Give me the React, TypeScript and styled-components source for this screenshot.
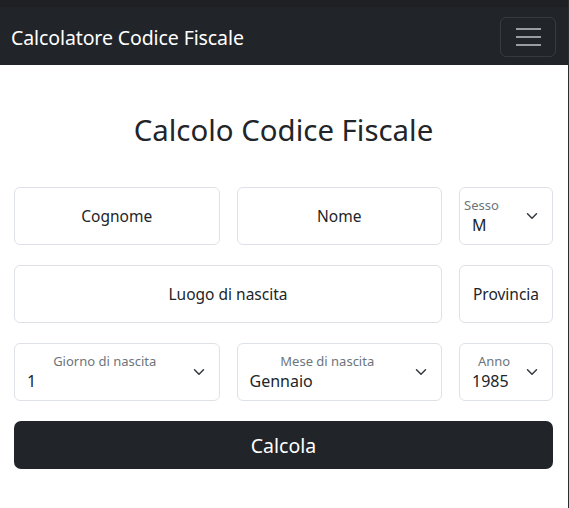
import styled, { createGlobalStyle } from "styled-components";

const GlobalStyle = createGlobalStyle`
  * { box-sizing: border-box; }
  body {
    margin: 0;
    font-family: "Noto Sans", "Open Sans", sans-serif;
    color: #212529;
    background: #fff;
  }
`;

type Align = "left" | "center";

const Chevron = () => (
  <ChevronIcon viewBox="0 0 16 16" aria-hidden>
    <path d="m2 5 6 6 6-6" fill="none" stroke="#343a40" strokeWidth="2" strokeLinecap="round" strokeLinejoin="round" />
  </ChevronIcon>
);

function SelectBox({ label, value, align = "center" }: { label: string; value: string; align?: Align }) {
  return (
    <SelectWrap>
      <SelectLabel align={align}>{label}</SelectLabel>
      <SelectValue>{value}</SelectValue>
      <Chevron />
    </SelectWrap>
  );
}

export default function App() {
  return (
    <Page>
      <GlobalStyle />
      <Navbar>
        <Brand>Calcolatore Codice Fiscale</Brand>
        <Toggler aria-label="menu">
          <TogglerLine />
          <TogglerLine />
          <TogglerLine />
        </Toggler>
      </Navbar>
      <Main>
        <Title>Calcolo Codice Fiscale</Title>
        <Form>
          <FormRow>
            <TextInput placeholder="Cognome" />
            <TextInput placeholder="Nome" />
            <SelectBox label="Sesso" value="M" align="left" />
          </FormRow>
          <FormRow>
            <TextInput placeholder="Luogo di nascita" wide />
            <TextInput placeholder="Provincia" />
          </FormRow>
          <FormRow>
            <SelectBox label="Giorno di nascita" value="1" />
            <SelectBox label="Mese di nascita" value="Gennaio" />
            <SelectBox label="Anno" value="1985" />
          </FormRow>
          <SubmitButton type="button">Calcola</SubmitButton>
        </Form>
      </Main>
    </Page>
  );
}

const Page = styled.div`
  min-height: 100vh;
  width: 569px;
  border-right: 1px solid #2b2d30;
`;

const Navbar = styled.nav`
  height: 65px;
  background: #212529;
  border-top: 7px solid #1e2023;
  display: flex;
  align-items: center;
  justify-content: space-between;
  padding: 2px 12px 0 11px;
`;

const Brand = styled.span`
  color: #fff;
  font-size: 19.5px;
  letter-spacing: -0.1px;
`;

const Toggler = styled.button`
  width: 56px;
  height: 40px;
  background: transparent;
  border: 1px solid rgba(255, 255, 255, 0.1);
  border-radius: 6px;
  display: flex;
  flex-direction: column;
  align-items: center;
  justify-content: center;
  gap: 6px;
  padding: 0;
`;

const TogglerLine = styled.span`
  display: block;
  width: 25px;
  height: 2px;
  background: rgba(255, 255, 255, 0.55);
`;

const Main = styled.main`
  padding: 0 15px 0 14px;
`;

const Title = styled.h1`
  margin: 0;
  padding: 48px 0 39px;
  text-align: center;
  font-size: 29.4px;
  font-weight: 400;
  line-height: 35px;
`;

const Form = styled.form`
  display: flex;
  flex-direction: column;
  gap: 20px;
`;

const FormRow = styled.div`
  display: grid;
  grid-template-columns: 1fr 1fr 94px;
  column-gap: 17px;
`;

const TextInput = styled.input<{ wide?: boolean }>`
  grid-column: ${(p) => (p.wide ? "span 2" : "auto")};
  height: 58px;
  width: 100%;
  border: 1px solid #dee2e6;
  border-radius: 6px;
  text-align: center;
  font-family: inherit;
  font-size: 15.5px;
  color: #212529;
  padding: 0 6px;
  &::placeholder {
    color: #212529;
    opacity: 1;
  }
`;

const SelectWrap = styled.div`
  position: relative;
  height: 58px;
  border: 1px solid #dee2e6;
  border-radius: 6px;
  padding: 8px 36px 0 12px;
`;

const SelectLabel = styled.div<{ align: Align }>`
  font-size: 13px;
  color: #6c757d;
  line-height: 18px;
  text-align: ${(p) => p.align};
  margin-left: ${(p) => (p.align === "left" ? "-8px" : "0")};
`;

const SelectValue = styled.div`
  font-size: 16px;
  line-height: 22px;
`;

const ChevronIcon = styled.svg`
  position: absolute;
  right: 12px;
  top: 22px;
  width: 16px;
  height: 12px;
`;

const SubmitButton = styled.button`
  height: 48px;
  width: 100%;
  background: #212529;
  color: #fff;
  border: none;
  border-radius: 7px;
  font-family: inherit;
  font-size: 19.5px;
`;
